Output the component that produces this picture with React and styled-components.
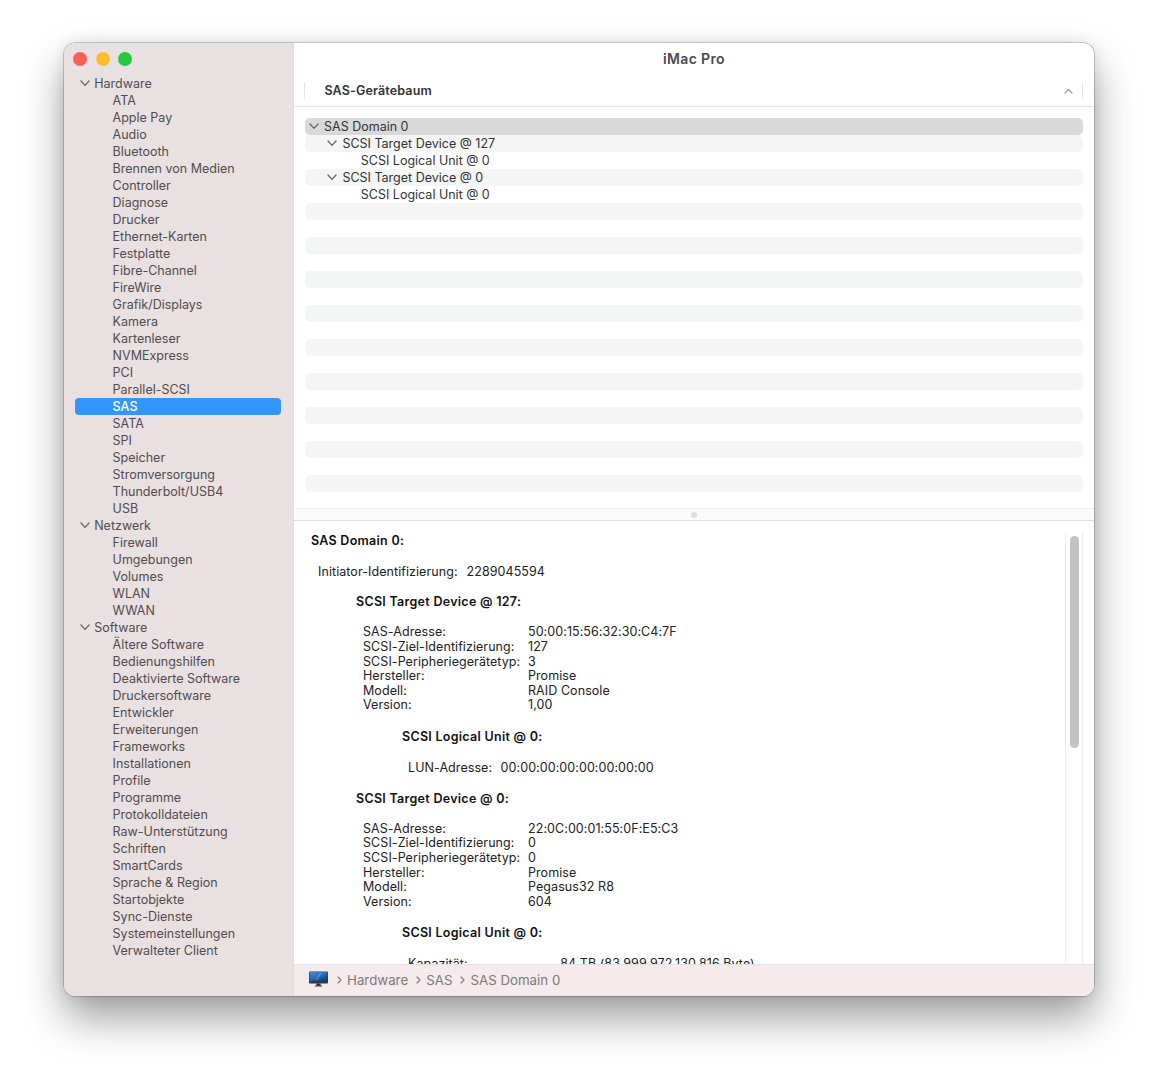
import React from 'react'
import styled, { createGlobalStyle } from 'styled-components'

const GlobalStyle = createGlobalStyle`
  html, body { margin: 0; padding: 0; height: 1080px; overflow: hidden; background: #fff; }
  body { font-family: Inter, "Liberation Sans", sans-serif; font-size: 12.5px; color: #2b2b2b; }
`

const Page = styled.div`
  padding: 43px 63px 0 64px;
`

const Window = styled.div`
  display: flex;
  width: 1030px;
  height: 953px;
  border-radius: 11px;
  overflow: hidden;
  background: #fff;
  box-shadow: 0 0 0 .5px rgba(0,0,0,.35), 0 22px 42px rgba(0,0,0,.38), 0 0 14px rgba(0,0,0,.1);
`

const Sidebar = styled.div`
  width: 230px;
  flex: none;
  background: #e9e0e1;
  border-right: 1px solid #e2dadb;
  box-sizing: border-box;
  padding: 0 12px 0 11px;
`

const Lights = styled.div`
  display: flex;
  gap: 8.5px;
  height: 32px;
  padding-top: 9px;
  box-sizing: border-box;
  margin-left: -2px;
`

const Light = styled.span`
  width: 14px;
  height: 14px;
  border-radius: 50%;
  background: ${p => p.$color};
`

const NavRow = styled.div`
  display: flex;
  align-items: center;
  height: 17px;
  width: 206px;
  border-radius: 4px;
  padding-left: ${p => (p.$group ? 5 : 37.6)}px;
  box-sizing: border-box;
  color: ${p => (p.$active ? '#fff' : '#504d4e')};
  background: ${p => (p.$active ? '#3395fe' : 'transparent')};
  font-weight: ${p => (p.$active ? 500 : 400)};
  white-space: nowrap;
`

const NavChevron = styled.svg`
  width: 10px;
  height: 7px;
  margin-right: 4.2px;
  flex: none;
`

const Main = styled.div`
  flex: 1;
  min-width: 0;
  display: flex;
  flex-direction: column;
`

const Title = styled.div`
  height: 32px;
  flex: none;
  text-align: center;
  line-height: 31px;
  font-size: 14px;
  letter-spacing: .35px;
  font-weight: 600;
  color: #4a4a4a;
`

const ColumnHeader = styled.div`
  height: 32px;
  flex: none;
  box-sizing: border-box;
  border-bottom: 1px solid #e3e3e3;
  padding: 7px 11px 0 10px;
`

const ColumnInner = styled.div`
  display: flex;
  align-items: center;
  justify-content: space-between;
  height: 17px;
  padding: 0 9px 0 19.4px;
  border-left: 1px solid #e6e6e6;
  border-right: 1px solid #e6e6e6;
  font-weight: 600;
  letter-spacing: .15px;
  color: #333;
`

const Tree = styled.div`
  height: 402px;
  flex: none;
  box-sizing: border-box;
  padding: 11px 11px 0;
  border-bottom: 1px solid #eeeeee;
`

const TreeRow = styled.div`
  display: flex;
  align-items: center;
  height: 17px;
  border-radius: 5px;
  padding-left: ${p => 4 + p.$level * 18.4}px;
  background: ${p => (p.$selected ? '#d9d9d9' : p.$striped ? '#f4f5f5' : 'transparent')};
  color: #333;
  white-space: nowrap;
`

const TreeChevron = styled.svg`
  width: 10px;
  height: 7px;
  margin-right: 5px;
  flex: none;
`

const TreeSpacer = styled.span`
  width: 15px;
  flex: none;
`

const Splitter = styled.div`
  height: 11px;
  flex: none;
  display: flex;
  align-items: center;
  justify-content: center;
  background: #fbfbfb;
  border-bottom: 1px solid #dcdcdc;
`

const SplitDot = styled.span`
  width: 6px;
  height: 6px;
  border-radius: 50%;
  background: #dedede;
`

const DetailPane = styled.div`
  flex: 1;
  min-height: 0;
  display: flex;
  overflow: hidden;
`

const Detail = styled.div`
  flex: 1;
  min-width: 0;
  padding: 12px 0 0 17px;
  color: #222;
  letter-spacing: .07px;
`

const Line = styled.div`
  display: flex;
  height: 15px;
  line-height: 15px;
  margin-left: ${p => p.$indent || 0}px;
  margin-top: ${p => p.$gap || 0}px;
  font-weight: ${p => (p.$bold ? 600 : 400)};
  letter-spacing: ${p => (p.$bold ? '.28px' : 'inherit')};
  white-space: nowrap;
  color: ${p => (p.$bold ? '#111' : '#222')};
`

const InlineValue = styled.span`
  margin-left: ${p => p.$gap}px;
`

const Props = styled.div`
  display: grid;
  grid-template-columns: 165px auto;
  grid-auto-rows: 14.65px;
  line-height: 14.65px;
  justify-content: start;
  margin-left: 52px;
  margin-top: 16.1px;
  white-space: nowrap;
`

const Scroll = styled.div`
  width: 18px;
  flex: none;
  margin: 11px 11px 0 0;
  box-sizing: border-box;
  border-left: 1px solid #eeeeee;
  border-right: 1px solid #eeeeee;
  padding: 3.5px 3px 0 4px;
`

const Thumb = styled.div`
  height: 212px;
  border-radius: 5px;
  background: #c2c2c2;
`

const PathBar = styled.div`
  height: 32px;
  flex: none;
  box-sizing: border-box;
  display: flex;
  align-items: center;
  padding: 0 0 2px 15px;
  background: #f5ebec;
  border-top: 1px solid #e6dfe0;
  color: #7d7878;
  font-size: 13.3px;
`

const Crumb = styled.span`
  display: flex;
  align-items: center;
  margin-left: 8px;
`

const CrumbArrow = styled.svg`
  width: 5px;
  height: 8px;
  margin-right: 5px;
`

const groups = [
  ['Hardware', ['ATA', 'Apple Pay', 'Audio', 'Bluetooth', 'Brennen von Medien', 'Controller', 'Diagnose', 'Drucker', 'Ethernet-Karten', 'Festplatte', 'Fibre-Channel', 'FireWire', 'Grafik/Displays', 'Kamera', 'Kartenleser', 'NVMExpress', 'PCI', 'Parallel-SCSI', 'SAS', 'SATA', 'SPI', 'Speicher', 'Stromversorgung', 'Thunderbolt/USB4', 'USB']],
  ['Netzwerk', ['Firewall', 'Umgebungen', 'Volumes', 'WLAN', 'WWAN']],
  ['Software', ['Ältere Software', 'Bedienungshilfen', 'Deaktivierte Software', 'Druckersoftware', 'Entwickler', 'Erweiterungen', 'Frameworks', 'Installationen', 'Profile', 'Programme', 'Protokolldateien', 'Raw-Unterstützung', 'Schriften', 'SmartCards', 'Sprache & Region', 'Startobjekte', 'Sync-Dienste', 'Systemeinstellungen', 'Verwalteter Client']],
]

const treeRows = [
  { level: 0, open: true, label: 'SAS Domain 0', selected: true },
  { level: 1, open: true, label: 'SCSI Target Device @ 127', striped: true },
  { level: 2, label: 'SCSI Logical Unit @ 0' },
  { level: 1, open: true, label: 'SCSI Target Device @ 0', striped: true },
  { level: 2, label: 'SCSI Logical Unit @ 0' },
]

const Chevron = ({ as: Comp, color }) => (
  <Comp viewBox="0 0 10 7">
    <path d="M1 1l4 4.4L9 1" fill="none" stroke={color} strokeWidth="1.4" strokeLinecap="round" strokeLinejoin="round" />
  </Comp>
)

const ImacIcon = () => (
  <svg width="20" height="17" viewBox="0 0 20 17">
    <defs>
      <linearGradient id="screen" x1="0" y1="0" x2="0.6" y2="1">
        <stop offset="0" stopColor="#3f8fdf" />
        <stop offset=".55" stopColor="#2a6cb8" />
        <stop offset="1" stopColor="#173f7e" />
      </linearGradient>
    </defs>
    <rect x="0" y="0.5" width="19" height="12" rx="1" fill="#33343a" />
    <rect x="0.6" y="1" width="17.8" height="9.6" fill="url(#screen)" />
    <path d="M6 9l5-7h2l-5 7z" fill="#8fc0ee" opacity=".4" />
    <path d="M7.5 12.5h4l.4 2.3H7.1z" fill="#2b2b2f" />
    <rect x="5.8" y="14.4" width="7.4" height="1" rx=".5" fill="#3a3a3e" />
  </svg>
)

const PropList = ({ rows }) => (
  <Props>
    {rows.map(([k, v]) => (
      <React.Fragment key={k}>
        <span>{k}</span>
        <span>{v}</span>
      </React.Fragment>
    ))}
  </Props>
)

const App = () => (
  <Page>
    <GlobalStyle />
    <Window>
      <Sidebar>
        <Lights>
          <Light $color="#ff5f57" />
          <Light $color="#febc2e" />
          <Light $color="#28c840" />
        </Lights>
        {groups.map(([name, items]) => (
          <React.Fragment key={name}>
            <NavRow $group>
              <Chevron as={NavChevron} color="#6f6b6c" />
              {name}
            </NavRow>
            {items.map(item => (
              <NavRow key={item} $active={item === 'SAS'}>{item}</NavRow>
            ))}
          </React.Fragment>
        ))}
      </Sidebar>
      <Main>
        <Title>iMac Pro</Title>
        <ColumnHeader>
          <ColumnInner>
            SAS-Gerätebaum
            <svg width="9" height="6" viewBox="0 0 9 6">
              <path d="M1 5l3.5-3.6L8 5" fill="none" stroke="#a0a0a0" strokeWidth="1.4" strokeLinecap="round" strokeLinejoin="round" />
            </svg>
          </ColumnInner>
        </ColumnHeader>
        <Tree>
          {treeRows.map((r, i) => (
            <TreeRow key={i} $level={r.level} $selected={r.selected} $striped={r.striped}>
              {r.open ? <Chevron as={TreeChevron} color="#6b6b6b" /> : <TreeSpacer />}
              {r.label}
            </TreeRow>
          ))}
          {Array.from({ length: 18 }).map((_, i) => (
            <TreeRow key={i} $level={0} $striped={i % 2 === 0} />
          ))}
        </Tree>
        <Splitter><SplitDot /></Splitter>
        <DetailPane>
          <Detail>
            <Line $bold>SAS Domain 0:</Line>
            <Line $indent={7} $gap={15.8}>
              Initiator-Identifizierung:<InlineValue $gap={9}>2289045594</InlineValue>
            </Line>
            <Line $bold $indent={45} $gap={15.4}>SCSI Target Device @ 127:</Line>
            <PropList rows={[
              ['SAS-Adresse:', '50:00:15:56:32:30:C4:7F'],
              ['SCSI-Ziel-Identifizierung:', '127'],
              ['SCSI-Peripheriegerätetyp:', '3'],
              ['Hersteller:', 'Promise'],
              ['Modell:', 'RAID Console'],
              ['Version:', '1,00'],
            ]} />
            <Line $bold $indent={91} $gap={15.8}>SCSI Logical Unit @ 0:</Line>
            <Line $indent={97} $gap={15.8}>
              LUN-Adresse:<InlineValue $gap={8.5}>00:00:00:00:00:00:00:00</InlineValue>
            </Line>
            <Line $bold $indent={45} $gap={15.8}>SCSI Target Device @ 0:</Line>
            <PropList rows={[
              ['SAS-Adresse:', '22:0C:00:01:55:0F:E5:C3'],
              ['SCSI-Ziel-Identifizierung:', '0'],
              ['SCSI-Peripheriegerätetyp:', '0'],
              ['Hersteller:', 'Promise'],
              ['Modell:', 'Pegasus32 R8'],
              ['Version:', '604'],
            ]} />
            <Line $bold $indent={91} $gap={15.8}>SCSI Logical Unit @ 0:</Line>
            <Line $indent={97} $gap={15.8}>
              Kapazität:<InlineValue $gap={92.5}>84 TB (83.999.972.130.816 Byte)</InlineValue>
            </Line>
          </Detail>
          <Scroll><Thumb /></Scroll>
        </DetailPane>
        <PathBar>
          <ImacIcon />
          {['Hardware', 'SAS', 'SAS Domain 0'].map(c => (
            <Crumb key={c}>
              <CrumbArrow viewBox="0 0 5 8">
                <path d="M1 1l3 3-3 3" fill="none" stroke="#7d7878" strokeWidth="1.1" strokeLinecap="round" strokeLinejoin="round" />
              </CrumbArrow>
              {c}
            </Crumb>
          ))}
        </PathBar>
      </Main>
    </Window>
  </Page>
)

export default App
